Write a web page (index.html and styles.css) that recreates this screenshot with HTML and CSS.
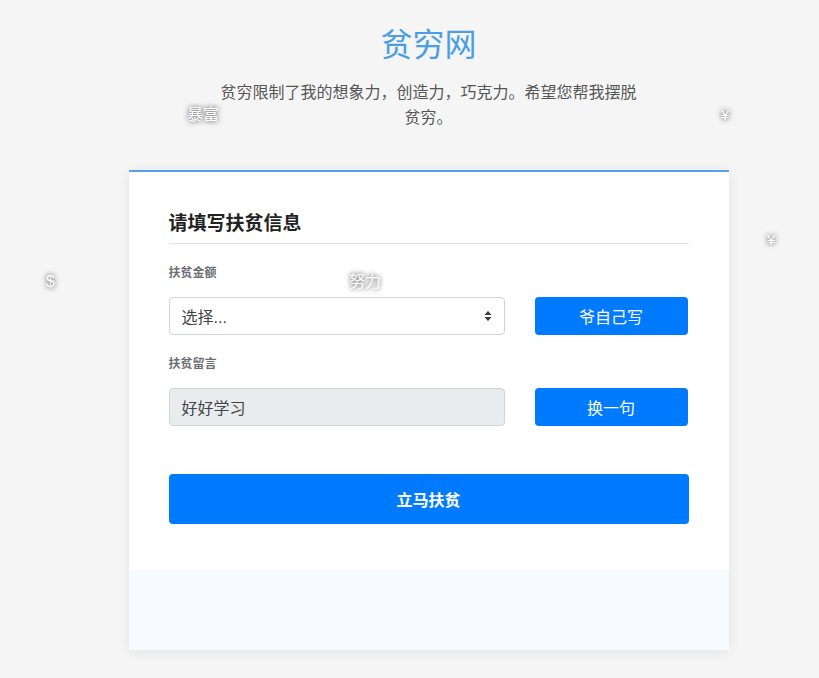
FILE: index.html
```html
<!DOCTYPE html>
<html lang="zh-CN">
<head>
    <meta charset="UTF-8">
    <meta name="viewport" content="width=device-width, initial-scale=1.0">
    <title>贫穷网</title>
    <link rel="stylesheet" href="styles.css">
</head>
<body>
    <div class="float f1">暴富</div>
    <div class="float f2">¥</div>
    <div class="float f3">¥</div>
    <div class="float f4">$</div>
    <div class="float f5">努力</div>

    <div class="page">
        <div class="header">
            <h1 class="title">贫穷网</h1>
            <p class="intro">贫穷限制了我的想象力，创造力，巧克力。希望您帮我摆脱贫穷。</p>
        </div>

        <div class="card">
            <div class="card-body">
                <h3 class="card-title">请填写扶贫信息</h3>

                <label class="label">扶贫金额</label>
                <div class="row">
                    <div class="select">
                        <span>选择...</span>
                        <svg class="arrows" width="8" height="12" viewBox="0 0 8 12">
                            <path d="M4 1 L7.5 5 L0.5 5 Z M4 11 L7.5 7 L0.5 7 Z" fill="#343a40"/>
                        </svg>
                    </div>
                    <button class="btn">爷自己写</button>
                </div>

                <label class="label">扶贫留言</label>
                <div class="row">
                    <div class="input">好好学习</div>
                    <button class="btn">换一句</button>
                </div>

                <button class="btn btn-big">立马扶贫</button>
            </div>
            <div class="card-footer"></div>
        </div>
    </div>
</body>
</html>
```
FILE: styles.css
```css
body {
    margin: 0;
    background-color: #f5f5f5;
    font-family: "Liberation Sans", "Noto Sans CJK SC", sans-serif;
    color: #333;
    position: relative;
    min-height: 678px;
}

.page {
    padding-left: 38px;
}

.header {
    text-align: center;
    padding-top: 22px;
}

.title {
    margin: 0;
    font-size: 32px;
    font-weight: normal;
    color: #4a9ee6;
    line-height: 46px;
}

.intro {
    width: 420px;
    margin: 12px auto 0;
    font-size: 16px;
    line-height: 25px;
    color: #555;
}

.card {
    width: 600px;
    margin: 40px auto 0;
    background-color: #fff;
    border-top: 2px solid #5aa0f2;
    box-shadow: 0 2px 12px rgba(0, 0, 0, 0.08);
}

.card-body {
    padding: 38px 40px 46px;
}

.card-title {
    margin: 0 0 20px;
    padding-bottom: 5px;
    font-size: 19px;
    line-height: 28px;
    font-weight: bold;
    color: #222;
    border-bottom: 1px solid #e3e3e3;
}

.label {
    display: block;
    font-size: 12px;
    font-weight: bold;
    color: #6c6f75;
    line-height: 18px;
    margin-bottom: 15px;
}

.row {
    display: grid;
    grid-template-columns: 336px 153px;
    column-gap: 30px;
    margin-bottom: 20px;
}

.select,
.input {
    box-sizing: border-box;
    height: 38px;
    padding: 0 12px;
    display: flex;
    align-items: center;
    justify-content: space-between;
    font-size: 16px;
    color: #444;
    border: 1px solid #ced4da;
    border-radius: 4px;
    background-color: #fff;
}

.input {
    background-color: #e9ecef;
}

.btn {
    box-sizing: border-box;
    height: 38px;
    border: none;
    border-radius: 4px;
    background-color: #007bff;
    color: #fff;
    font-family: inherit;
    font-size: 16px;
}

.btn-big {
    display: block;
    width: 520px;
    height: 50px;
    margin-top: 48px;
    font-weight: bold;
}

.card-footer {
    height: 80px;
    background-color: #f7faff;
}

.float {
    position: absolute;
    color: #fff;
    font-size: 16px;
    line-height: 18px;
    text-shadow: 0 0 4px #777, 0 0 6px #999;
}

.f1 { left: 187px; top: 106px; }
.f2 { left: 721px; top: 106px; font-size: 15px; }
.f3 { left: 767px; top: 231px; font-size: 15px; }
.f4 { left: 46px; top: 273px; }
.f5 { left: 349px; top: 273px; }
```
